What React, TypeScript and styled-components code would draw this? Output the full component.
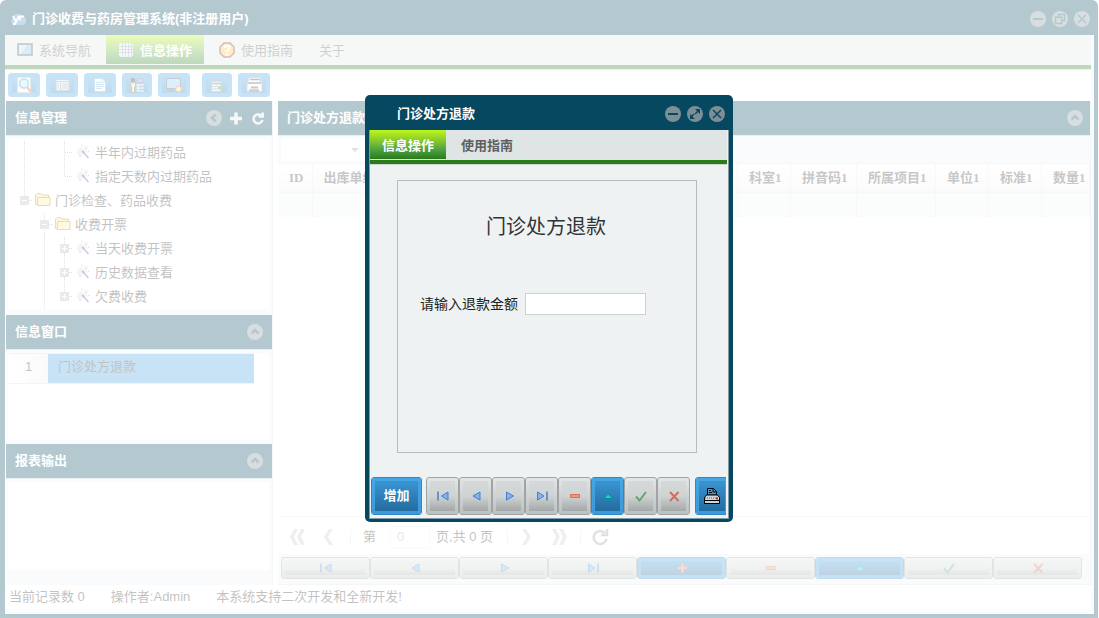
import React from 'react';
import styled, { createGlobalStyle, css } from 'styled-components';

const navy = '#05485f';
const panel = '#eef2f3';
const sans = '"Liberation Sans", "Noto Sans CJK SC", sans-serif';
const serif = '"Liberation Serif", "Noto Sans CJK SC", serif';

const GlobalStyle = createGlobalStyle`
  *, *::before, *::after { box-sizing: border-box; }
  body { margin: 0; background: #fff; font: 13px/20px ${sans}; color: #333; }
  button, input, select { font: inherit; color: inherit; margin: 0; }
  button { cursor: pointer; }
  h1, h2, p, ul { margin: 0; padding: 0; }
  svg { display: block; flex: none; }
`;

/* ---------- window frame ---------- */

const Page = styled.div`
  position: relative;
  min-height: 100vh;
  display: flex;
`;

const AppWindow = styled.div`
  flex: 1;
  min-width: 0;
  display: flex;
  flex-direction: column;
  padding: 0 4px 4px 5px;
  margin-right: 1px;
  background: ${navy};
  border-radius: 6px 6px 0 0;
`;

const TitleBar = styled.header`
  height: 35px;
  display: flex;
  align-items: center;
  gap: 6px;
  padding: 3px 4px 0 5px;
  color: #fff;
`;

const Title = styled.h1`
  flex: 1;
  font-size: 13px;
  line-height: 20px;
`;

const Buttons = styled.div`
  display: flex;
  gap: 6px;
`;

const RoundButton = styled.button<{ $plain?: boolean }>`
  width: 16px;
  height: 16px;
  padding: 0;
  border: 0;
  border-radius: 50%;
  background: ${(p) => (p.$plain ? 'transparent' : '#7d8f96')};
  svg {
    fill: none;
    stroke: ${(p) => (p.$plain ? '#e2e6e7' : navy)};
    stroke-width: 2;
  }
`;

const Content = styled.div`
  flex: 1;
  display: flex;
  flex-direction: column;
  background: #fff;
  border-right: 3px solid ${panel};
  border-bottom: 5px solid #f8f9f9;
`;

/* ---------- tab strip ---------- */

const TabStrip = styled.nav`
  display: flex;
  height: 34px;
  background: #dfe4e4;
  border-bottom: 4px solid #2b7a1b;
  box-shadow: 0 1px 0 #ccd6cf;
  padding-bottom: 1px;
`;

const Tab = styled.button<{ $active?: boolean; $left: number; $right?: number }>`
  display: flex;
  align-items: center;
  gap: 6px;
  padding: 2px ${(p) => p.$right ?? p.$left}px 0 ${(p) => p.$left}px;
  border: 0;
  background: transparent;
  color: #5c6060;
  ${(p) =>
    p.$active &&
    css`
      color: #fff;
      font-weight: bold;
      background: linear-gradient(#bdf71a 0%, #8acb2c 35%, #4a9f40 70%, #2b7a1b 100%);
    `}
`;

/* ---------- tool bar ---------- */

const ToolBar = styled.div`
  display: flex;
  gap: 6px;
  padding: 4px 3px;
  height: 32px;
`;

const ringButton = css<{ $blue?: boolean }>`
  display: flex;
  align-items: center;
  justify-content: center;
  padding: 3px;
  border-radius: 3px;
  border: 1px solid ${(p) => (p.$blue ? '#3187c4' : '#9fa4a4')};
  background: ${(p) =>
    p.$blue
      ? 'linear-gradient(#3a94d2, #236c9f) content-box, linear-gradient(#45a5e5, #3d99d9) padding-box'
      : 'linear-gradient(#d5d9d9 0%, #cfd3d3 50%, #a4a8a8 100%) content-box, linear-gradient(#e2e6e6, #bcc0c0) padding-box'};
`;

const ToolButton = styled.button<{ $blue?: boolean; $narrow?: boolean; $apart?: boolean }>`
  ${ringButton}
  border-color: #45a2e2;
  background: linear-gradient(#45a2e0, #3187c4) content-box, #45a5e5;
  width: ${(p) => (p.$narrow ? 30 : 32)}px;
  height: 24px;
  margin-left: ${(p) => (p.$apart ? 6 : 0)}px;
  svg { margin: -2px 0; }
`;

/* ---------- body ---------- */

const Body = styled.div`
  flex: 1;
  display: flex;
  gap: 5px;
  padding-left: 1px;
`;

const Side = styled.aside`
  flex: 0 0 267px;
  display: flex;
  flex-direction: column;
  background: ${panel};
  border-right: 1px solid #dbe1e3;
`;

const Main = styled.main`
  flex: 1;
  min-width: 0;
  display: flex;
  flex-direction: column;
  background: ${panel};
  border-right: 1px solid #dbe1e3;
`;

const PanelHead = styled.div<{ $end: number }>`
  height: 35px;
  flex: none;
  display: flex;
  align-items: center;
  gap: 6px;
  padding: 0 ${(p) => p.$end}px 0 9px;
  background: ${navy};
  border-bottom: 1px solid #b9ccd4;
  color: #fff;
  h2 { flex: 1; font-size: 13px; line-height: 20px; }
`;

const PanelBody = styled.section<{ $height?: number; $bottom: number }>`
  ${(p) => (p.$height ? `height: ${p.$height}px;` : 'flex: 1;')}
  padding: 3px 3px ${(p) => p.$bottom}px 2px;
  display: flex;
  > * { flex: 1; background: #fff; overflow: hidden; }
`;

const Tree = styled.ul`
  list-style: none;
  padding: 2px 0 0 7px;
`;

const TreeRow = styled.li`
  display: flex;
  align-items: center;
  height: 24px;
  white-space: nowrap;
`;

const ListRow = styled.div`
  display: flex;
  height: 31px;
  margin: 0 15px 0 1px;
  border: solid #c9dff0;
  border-width: 1px 0;
`;

const RowNumber = styled.div`
  width: 39px;
  padding-top: 3px;
  text-align: center;
  background: linear-gradient(90deg, #fff, #eee);
`;

const RowText = styled.div`
  flex: 1;
  padding: 3px 10px;
  background: #45a0de;
`;

/* ---------- data grid ---------- */

const Filter = styled.div`
  height: 27px;
  padding: 3px 3px 2px;
`;

const SelectBox = styled.label`
  display: flex;
  align-items: center;
  justify-content: flex-end;
  width: 87px;
  height: 22px;
  background: #fff;
  position: relative;
  svg { position: absolute; right: 8px; pointer-events: none; }
`;

const Select = styled.select`
  appearance: none;
  width: 100%;
  height: 100%;
  border: 0;
  background: transparent;
`;

const Grid = styled.table`
  width: 100%;
  table-layout: fixed;
  border-collapse: collapse;
  font-family: ${serif};
  th, td { border-right: 1px solid #e6e8e8; padding: 0; overflow: hidden; white-space: nowrap; }
  th {
    height: 29px;
    padding-left: 11px;
    text-align: left;
    background: linear-gradient(#fff, #efefef);
    border-top: 1px solid #e6e8e8;
    border-bottom: 1px solid #e6e8e8;
    color: #444;
  }
  td { height: 24px; background: #f2f7f4; }
`;

const GridSpace = styled.div`
  flex: 1;
  background: #fff;
`;

const Pager = styled.div`
  height: 38px;
  flex: none;
  display: flex;
  align-items: center;
  padding: 2px 0 0 10px;
  background: #fff;
  border-top: 1px solid #e6e8e8;
`;

const PagerButton = styled.button<{ $w: number }>`
  width: ${(p) => p.$w}px;
  height: 20px;
  padding: 0;
  border: 0;
  background: transparent;
  display: flex;
  align-items: center;
  justify-content: center;
`;

const Divider = styled.span<{ $left?: number; $right?: number }>`
  width: 1px;
  height: 14px;
  background: #e2e2e2;
  margin: 0 ${(p) => p.$right ?? 0}px 0 ${(p) => p.$left ?? 6}px;
`;

const PageLabel = styled.label`
  display: flex;
  align-items: center;
  gap: 14px;
`;

const PageInput = styled.input`
  width: 40px;
  height: 22px;
  padding: 0 6px;
  border: 1px solid #eee;
  background: #fff;
  color: #aaa;
`;

const PageTotal = styled.span`
  width: 71px;
  padding-left: 6px;
  white-space: nowrap;
`;

const RecordNav = styled.div`
  display: flex;
  height: 31px;
  flex: none;
  padding: 3px 8px 5px 3px;
  border-bottom: 1px solid #dbe1e3;
`;

const RecordButton = styled.button<{ $blue?: boolean }>`
  ${ringButton}
  flex: 1;
  min-width: 0;
`;

const StatusBar = styled.footer`
  display: flex;
  height: 24px;
  padding: 2px 4px;
  color: #333;
  span { margin-right: 26px; white-space: pre; }
`;

/* ---------- dialog ---------- */

const Mask = styled.div`
  position: absolute;
  inset: 0;
  display: grid;
  place-items: center;
  padding: 0 1px 1px 0;
  background: rgba(255, 255, 255, 0.7);
`;

const Dialog = styled.section`
  width: 368px;
  padding: 0 4px 3px;
  border-radius: 5px;
  background: ${navy};
`;

const DialogTitle = styled.header`
  height: 35px;
  display: flex;
  align-items: center;
  padding: 2px 4px 0 28px;
  color: #fff;
  h2 { flex: 1; font-size: 13px; line-height: 20px; }
`;

const DialogContent = styled.div`
  background: ${panel};
  border: solid #7f9ba6;
  border-width: 0 1px 1px;
`;

const DialogTabs = styled(TabStrip)`
  margin-right: 1px;
  font-weight: bold;
`;

const Form = styled.form`
  height: 273px;
  margin: 16px 31px 24px 27px;
  border: 1px solid #b8bcbd;
`;

const FormTitle = styled.h2`
  padding: 31px 2px 0 0;
  margin-bottom: 51px;
  text-align: center;
  font-size: 20px;
  line-height: 30px;
  font-weight: normal;
`;

const Field = styled.label`
  display: flex;
  align-items: center;
  gap: 7px;
  padding-left: 22px;
  font-size: 14px;
  color: #222;
`;

const TextInput = styled.input`
  width: 121px;
  height: 22px;
  border: 1px solid #ccd0d2;
  background: #fff;
  padding: 0 4px;
`;

const DialogBar = styled.div`
  display: flex;
  height: 41px;
  padding: 0 1px 3px;
  margin-right: 2px;
  overflow: hidden;
`;

const DialogButton = styled.button<{ $blue?: boolean; $w: number; $after?: number }>`
  ${ringButton}
  flex: none;
  width: ${(p) => p.$w}px;
  height: 38px;
  margin-right: ${(p) => p.$after ?? 0}px;
  color: #fff;
  font-weight: bold;
`;

/* ---------- icons ---------- */

type RoundKind = 'min' | 'restore' | 'max' | 'close' | 'up' | 'left' | 'plus' | 'reload';
const roundPaths: Record<RoundKind, React.ReactNode> = {
  min: <path d="M3 8h10" />,
  restore: <path strokeWidth="1.4" d="M6.500 6V3.500h6v6H10M3.500 6.200h6.300v6.300H3.500z" />,
  max: (
    <g fill={navy} stroke="none">
      <path d="M8 3h5v5zM3 8v5h5z" />
      <path d="m11 4 1 1-3.500 3.500-1-1zM7.500 8.500l-3.500 3.500-1-1 3.500-3.500z" />
    </g>
  ),
  close: <path strokeWidth="1.500" d="m4 4 8 8M12 4l-8 8" />,
  up: <path strokeWidth="2.500" d="m4.500 9.500 3.500-3.500 3.500 3.500" />,
  left: <path strokeWidth="2.500" d="M9.500 4.500 6 8l3.500 3.500" />,
  plus: <path strokeWidth="3.500" d="M8 2.500v12M2 8.500h12" />,
  reload: <path strokeWidth="2.500" d="M11 5.500A4.500 4.500 0 1 0 12.500 10M8.500 6.500h4.200V2.500" />,
};

const Round = ({ kind, label }: { kind: RoundKind; label: string }) => (
  <RoundButton type="button" aria-label={label} $plain={kind === 'plus' || kind === 'reload'}>
    <svg width="16" height="16" viewBox="0 0 16 16">{roundPaths[kind]}</svg>
  </RoundButton>
);

type NavKind = 'first' | 'prev' | 'next' | 'last' | 'add' | 'remove' | 'edit' | 'ok' | 'cancel';
const arrow = { fill: '#82b4ee', stroke: '#4080cc' };
const navPaths: Record<NavKind, React.ReactNode> = {
  first: <g {...arrow}><path d="M13 4v8L6.500 8z" /><path d="M3 3.500v9" strokeWidth="1.500" /></g>,
  prev: <path d="M12 4v8L5 8z" {...arrow} />,
  next: <path d="M5.500 4v8l7-4z" {...arrow} />,
  last: <g {...arrow}><path d="M3.500 4v8l6.500-4z" /><path d="M13 3.500v9" strokeWidth="1.500" /></g>,
  add: <g stroke="#e07050" fill="#f49478"><path d="M7.500 3.500h2v3.500h3.500v2H9.500v3.500h-2V9H4V7h3.500z" /></g>,
  remove: <path d="M3.500 6.500h9v3h-9z" fill="#f09878" stroke="#d8704e" />,
  edit: <path d="M3.500 10.500h9.500L8.200 6z" fill="#18d0d0" stroke="#0b8c96" />,
  ok: <path d="m3 8.500 3.500 4L13 4" fill="none" stroke="#5fa673" strokeWidth="2" />,
  cancel: <path d="m4 4 8.500 9M12.500 4 4 13" fill="none" stroke="#dd6a58" strokeWidth="2" />,
};

const NavIcon = ({ kind }: { kind: NavKind }) => (
  <svg width="16" height="16" viewBox="0 0 16 16">{navPaths[kind]}</svg>
);

const Printer = () => (
  <svg width="18" height="18" viewBox="0 0 18 18">
    <path d="M4.500 8V1.500h6l3 3V8z" fill="#4f9ace" stroke="#000" />
    <path d="M10 1.500V5h3.500M6 3.500h2M6 5.500h3" stroke="#000" fill="none" />
    <path d="M1.500 10.500 3.500 8h11l2 2.500v6h-15z" fill="#cfd6da" stroke="#000" />
    <path d="M2 11h14" stroke="#53616b" strokeDasharray="1 1" />
    <path d="M1.500 13.500h15" stroke="#000" />
    <path d="M13 11.500h2" stroke="#e02020" strokeWidth="2" />
  </svg>
);

const Logo = () => (
  <svg width="16" height="14" viewBox="0 0 16 14">
    <path d="M4 13a4 4 0 0 1-1-7 5 5 0 0 1 9-2 4.500 4.500 0 0 1 0 9z" fill="#3d93c8" />
    <path d="m3 4 2.500 5M9 4l-4 8H3M14 4.500h-3.500l-1 4" fill="none" stroke="#fff" strokeWidth="1.800" />
  </svg>
);

const Monitor = () => (
  <svg width="16" height="18" viewBox="0 0 16 18">
    <path d="M1 2h14v11H1z" fill="#7cc0ea" stroke="#3a4048" strokeWidth="1.500" />
    <path d="M2 3h8L4 12H2z" fill="#b9def5" />
  </svg>
);

const GridIcon = () => (
  <svg width="16" height="18" viewBox="0 0 16 18">
    <rect x="1" y="1" width="14" height="14" rx="2" fill="#dfe6f5" />
    <path d="M1 4.500h14M1 7.500h14M1 10.500h14M4.500 1v14M7.500 1v14M10.500 1v14M13.500 1v14" stroke="#8c9ab8" />
  </svg>
);

const Help = () => (
  <svg width="16" height="18" viewBox="0 0 16 18">
    <path d="M5 1h6l4 4v6l-4 4H5l-4-4V5z" fill="#ffc23c" stroke="#6b2a18" strokeWidth="1.500" />
    <path d="M5.500 6c0-3 5-3 5 0 0 2-2.500 2-2.500 4M8 11.500v2" fill="none" stroke="#fff" strokeWidth="2" />
  </svg>
);

type ToolKind = 'search' | 'form' | 'doc' | 'user' | 'screen' | 'tableAdd' | 'print';
const toolPaths: Record<ToolKind, React.ReactNode> = {
  search: (
    <>
      <path d="M1.500.500h13v15h-13z" fill="#f4f4f0" stroke="#b8bcbc" />
      <circle cx="8" cy="6.500" r="4.500" fill="#b4e8fc" stroke="#4a98d0" strokeWidth="1.500" />
      <path d="m11 10 4 5" stroke="#e0703a" strokeWidth="2.500" />
    </>
  ),
  form: (
    <>
      <path d="M2 2.500h13v11H2z" fill="#dbeaf4" stroke="#7c94a6" />
      <path d="M2 4.500h13M6.500 5v8M8 7h6M8 9h6M8 11h6M3 7h2M3 9h2M3 11h2" stroke="#7c94a6" />
    </>
  ),
  doc: (
    <>
      <path d="M2.500 1.500h8l3 3v10h-11z" fill="#f0f9ff" stroke="#6ab0e0" />
      <path d="M10 1.500V5h3.500M4 5.500h5M4 7.500h8M4 9.500h8M4 11.500h6" stroke="#6ab0e0" fill="none" />
    </>
  ),
  user: (
    <>
      <circle cx="4" cy="3" r="2.300" fill="#3c3430" />
      <path d="M2 5.500h4.500V10H5.500v5.500H2.500V10H1.500z" fill="#f3dc9c" stroke="#6d5a3c" />
      <path d="M8.500 1.500h6v4h-6z" fill="#9a8cf0" stroke="#686c74" />
      <path d="M7.500 8h7.500M7.500 11h7.500M7.500 14h7.500M9 8v6" stroke="#d0d8dc" strokeWidth="1.500" />
    </>
  ),
  screen: (
    <>
      <path d="M.5 1.500h14v10H.5z" fill="#8cc8ee" stroke="#3e5c74" />
      <path d="M1 13.500h8" stroke="#3e5c74" />
      <circle cx="12.500" cy="12" r="3" fill="#f6e04c" stroke="#b04cb0" />
    </>
  ),
  tableAdd: (
    <>
      <path d="M2.500 2.500h10v12h-10z" fill="#e4e8e8" stroke="#8c9498" />
      <path d="M2.500 3.500h10M2.500 6.500h10" stroke="#5c88a8" strokeWidth="2" />
      <path d="M2.500 9.500h10M2.500 12h10" stroke="#8c9498" />
      <path d="M12.500 7.500v7M9 11h7" stroke="#3f9c48" strokeWidth="2" />
    </>
  ),
  print: (
    <>
      <path d="M3 .5h12l-1 5h2v9H1v-7z" fill="#f4f5f5" stroke="#989c9c" />
      <path d="M4 2.500h10M2 6h13" stroke="#3c3c3c" strokeWidth="1.500" />
      <path d="M5 10.500h7M3 13.500h10" stroke="#4c4c4c" strokeWidth="2" />
    </>
  ),
};

const Folder = () => (
  <svg width="20" height="18" viewBox="0 0 20 18">
    <path d="M.5 12.500V3l2-1.500h3L7 3h6.500v9.500z" fill="#fbe08c" stroke="#b08830" />
    <path d="M2.500 5.500h12.500v8H2.500z" fill="#ffeb9c" stroke="#b08830" />
  </svg>
);

const Wand = () => (
  <svg width="20" height="18" viewBox="0 0 20 18">
    <path d="M3 11V7l3-4 2 2 2-4 3 4-2 4-4-1-1 6z" fill="#dadfe0" />
    <path d="M1.500 8h2M3 4l1.500 1.500M7 .5V3M12.500 3l-2 2M14 7.500h-2.500M4 13l2-2" stroke="#8c9294" strokeDasharray="1 1" />
    <path d="m8 8 5.500 6" stroke="#8c2cd0" strokeWidth="1.500" />
    <path d="m7 7 2 2" stroke="#4c5458" strokeWidth="2" />
  </svg>
);

type GuideKind = 'blank' | 'line' | 'branch' | 'end' | 'minusEnd' | 'minusTop' | 'plus' | 'plusEnd';
const Guide = ({ kind }: { kind: GuideKind }) => {
  const box = kind.startsWith('minus') || kind.startsWith('plus');
  const top = kind === 'minusTop' ? 1 : 0;
  const bottom = kind === 'end' || kind === 'minusEnd' || kind === 'plusEnd' ? 12 : 24;
  return (
    <svg width="20" height="24" viewBox="0 0 20 24" shapeRendering="crispEdges">
      {kind !== 'blank' && <path d={`M9.500 ${top}V${bottom}`} stroke="#999" strokeDasharray="1 1" />}
      {kind !== 'blank' && kind !== 'line' && <path d="M10 11.500h8" stroke="#999" strokeDasharray="1 1" />}
      {box && <rect x="5" y="7" width="9" height="9" fill="#b4b9b9" />}
      {box && <path d={kind.startsWith('plus') ? 'M7 11.500h5M9.500 9v5' : 'M7 11.500h5'} stroke="#fff" />}
    </svg>
  );
};

const Chevron = ({ dir, double }: { dir: 1 | -1; double?: boolean }) => (
  <svg width="18" height="18" viewBox="0 0 18 18" fill="#c8c8c8">
    {dir < 0 ? (
      <path d={double ? 'M5 1h4L5 9l4 8H5L1 9zM12 1h4l-4 8 4 8h-4L8 9z' : 'M9 1h4L8 9l5 8H9L4 9z'} />
    ) : (
      <path d={double ? 'M2 1h4l4 8-4 8H2l4-8zM9 1h4l4 8-4 8H9l4-8z' : 'M5 1h4l5 8-5 8H5l5-8z'} />
    )}
  </svg>
);

/* ---------- data ---------- */

const tree: { guides: GuideKind[]; folder?: boolean; text: string }[] = [
  { guides: ['line', 'blank', 'branch'], text: '半年内过期药品' },
  { guides: ['line', 'blank', 'end'], text: '指定天数内过期药品' },
  { guides: ['minusEnd'], folder: true, text: '门诊检查、药品收费' },
  { guides: ['blank', 'minusTop'], folder: true, text: '收费开票' },
  { guides: ['blank', 'line', 'plus'], text: '当天收费开票' },
  { guides: ['blank', 'line', 'plus'], text: '历史数据查看' },
  { guides: ['blank', 'line', 'plusEnd'], text: '欠费收费' },
];

const columns: { name: string; width?: number }[] = [
  { name: 'ID', width: 34 },
  { name: '出库单编号' },
  { name: '科室1', width: 53 },
  { name: '拼音码1', width: 66 },
  { name: '所属项目1', width: 79 },
  { name: '单位1', width: 53 },
  { name: '标准1', width: 53 },
  { name: '数量1', width: 48 },
];

const tools: { kind: ToolKind; label: string; narrow?: boolean; apart?: boolean }[] = [
  { kind: 'search', label: '查询' },
  { kind: 'form', label: '表单' },
  { kind: 'doc', label: '文档' },
  { kind: 'user', label: '用户', narrow: true },
  { kind: 'screen', label: '窗口' },
  { kind: 'tableAdd', label: '新增', narrow: true, apart: true },
  { kind: 'print', label: '打印' },
];

const navLabels: Record<NavKind, string> = {
  first: '首条', prev: '上一条', next: '下一条', last: '末条',
  add: '增加', remove: '删除', edit: '编辑', ok: '保存', cancel: '取消',
};
const recordNav: NavKind[] = ['first', 'prev', 'next', 'last', 'add', 'remove', 'edit', 'ok', 'cancel'];
const dialogNav = recordNav.filter((k) => k !== 'add');

export default function App() {
  return (
    <Page>
      <GlobalStyle />
      <AppWindow>
        <TitleBar>
          <Logo />
          <Title>门诊收费与药房管理系统(非注册用户)</Title>
          <Buttons>
            <Round kind="min" label="最小化" />
            <Round kind="restore" label="还原" />
            <Round kind="close" label="关闭" />
          </Buttons>
        </TitleBar>
        <Content>
          <TabStrip>
            <Tab $left={12} $right={15}><Monitor />系统导航</Tab>
            <Tab $left={12} $active><GridIcon />信息操作</Tab>
            <Tab $left={15} $right={14}><Help />使用指南</Tab>
            <Tab $left={12}>关于</Tab>
          </TabStrip>
          <ToolBar>
            {tools.map((t) => (
              <ToolButton key={t.kind} $blue $narrow={t.narrow} $apart={t.apart} aria-label={t.label}>
                <svg width="16" height="16" viewBox="0 0 16 16">{toolPaths[t.kind]}</svg>
              </ToolButton>
            ))}
          </ToolBar>
          <Body>
            <Side>
              <PanelHead $end={6}>
                <h2>信息管理</h2>
                <Round kind="left" label="收起" />
                <Round kind="plus" label="添加" />
                <Round kind="reload" label="刷新" />
              </PanelHead>
              <PanelBody $height={179} $bottom={6}>
                <Tree>
                  {tree.map((row) => (
                    <TreeRow key={row.text}>
                      {row.guides.map((g, i) => <Guide key={i} kind={g} />)}
                      {row.folder ? <Folder /> : <Wand />}
                      {row.text}
                    </TreeRow>
                  ))}
                </Tree>
              </PanelBody>
              <PanelHead $end={9}>
                <h2>信息窗口</h2>
                <Round kind="up" label="折叠" />
              </PanelHead>
              <PanelBody $height={94} $bottom={4}>
                <div>
                  <ListRow>
                    <RowNumber>1</RowNumber>
                    <RowText>门诊处方退款</RowText>
                  </ListRow>
                </div>
              </PanelBody>
              <PanelHead $end={9}>
                <h2>报表输出</h2>
                <Round kind="up" label="折叠" />
              </PanelHead>
              <PanelBody $bottom={15}><div /></PanelBody>
            </Side>
            <Main>
              <PanelHead $end={7}>
                <h2>门诊处方退款</h2>
                <Round kind="up" label="折叠" />
              </PanelHead>
              <Filter>
                <SelectBox>
                  <Select aria-label="筛选"><option value="" /></Select>
                  <svg width="10" height="6" viewBox="0 0 10 6"><path d="M1 1h8L5 5z" fill="#999" /></svg>
                </SelectBox>
              </Filter>
              <Grid>
                <colgroup>
                  {columns.map((c) => <col key={c.name} width={c.width} />)}
                </colgroup>
                <thead>
                  <tr>{columns.map((c) => <th key={c.name} scope="col">{c.name}</th>)}</tr>
                </thead>
                <tbody>
                  <tr>{columns.map((c) => <td key={c.name} />)}</tr>
                </tbody>
              </Grid>
              <GridSpace />
              <Pager>
                <PagerButton $w={20} aria-label="首页"><Chevron dir={-1} double /></PagerButton>
                <PagerButton $w={42} aria-label="上一页"><Chevron dir={-1} /></PagerButton>
                <Divider $left={0} $right={12} />
                <PageLabel>第<PageInput defaultValue="0" /></PageLabel>
                <PageTotal>页,共 0 页</PageTotal>
                <Divider />
                <PagerButton $w={36} aria-label="下一页"><Chevron dir={1} /></PagerButton>
                <PagerButton $w={30} aria-label="末页"><Chevron dir={1} double /></PagerButton>
                <Divider />
                <PagerButton $w={38} aria-label="刷新">
                  <svg width="18" height="18" viewBox="0 0 18 18" fill="none" stroke="#999" strokeWidth="2.500">
                    <path d="M14 5a6.500 6.500 0 1 0 1.500 6M10 7h6V1" />
                  </svg>
                </PagerButton>
              </Pager>
              <RecordNav>
                {recordNav.map((k) => (
                  <RecordButton key={k} $blue={k === 'add' || k === 'edit'} aria-label={navLabels[k]}>
                    <NavIcon kind={k} />
                  </RecordButton>
                ))}
              </RecordNav>
            </Main>
          </Body>
          <StatusBar>
            <span>当前记录数 0</span>
            <span>操作者:Admin</span>
            <span>本系统支持二次开发和全新开发!</span>
          </StatusBar>
        </Content>
      </AppWindow>

      <Mask>
        <Dialog role="dialog" aria-label="门诊处方退款">
          <DialogTitle>
            <h2>门诊处方退款</h2>
            <Buttons>
              <Round kind="min" label="最小化" />
              <Round kind="max" label="最大化" />
              <Round kind="close" label="关闭" />
            </Buttons>
          </DialogTitle>
          <DialogContent>
            <DialogTabs>
              <Tab $left={12} $active>信息操作</Tab>
              <Tab $left={15}>使用指南</Tab>
            </DialogTabs>
            <Form>
              <FormTitle>门诊处方退款</FormTitle>
              <Field>
                请输入退款金额
                <TextInput />
              </Field>
            </Form>
            <DialogBar>
              <DialogButton $blue $w={51} $after={4}>增加</DialogButton>
              {dialogNav.map((k) => (
                <DialogButton key={k} $w={33} $blue={k === 'edit'} $after={k === 'cancel' ? 5 : 0} aria-label={navLabels[k]}>
                  <NavIcon kind={k} />
                </DialogButton>
              ))}
              <DialogButton $blue $w={34} aria-label="打印"><Printer /></DialogButton>
            </DialogBar>
          </DialogContent>
        </Dialog>
      </Mask>
    </Page>
  );
}
